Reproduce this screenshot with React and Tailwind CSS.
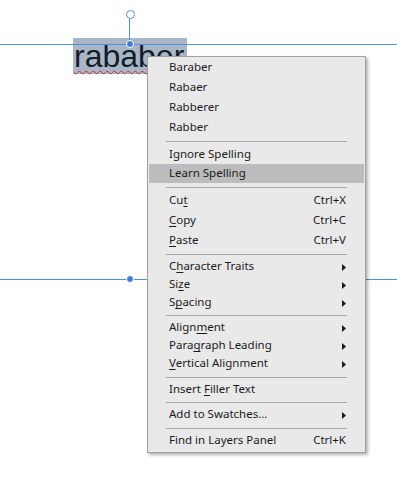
import React from "react";

const items = [
  { type: "group", h: "h-[20px]", rows: [
    { label: "Baraber" },
    { label: "Rabaer" },
    { label: "Rabberer" },
    { label: "Rabber" },
  ] },
  { type: "sep", h: "h-[7px]" },
  { type: "group", h: "h-[19px]", rows: [
    { label: "Ignore Spelling" },
    { label: "Learn Spelling", active: true },
  ] },
  { type: "sep", h: "h-[8px]" },
  { type: "group", h: "h-[20px]", rows: [
    { label: ["Cu", "t", ""], shortcut: "Ctrl+X" },
    { label: ["", "C", "opy"], shortcut: "Ctrl+C" },
    { label: ["", "P", "aste"], shortcut: "Ctrl+V" },
  ] },
  { type: "sep", h: "h-[7px]" },
  { type: "group", h: "h-[18px]", rows: [
    { label: ["C", "h", "aracter Traits"], sub: true },
    { label: ["Si", "z", "e"], sub: true },
    { label: ["S", "p", "acing"], sub: true },
  ] },
  { type: "sep", h: "h-[7px]" },
  { type: "group", h: "h-[18px]", rows: [
    { label: ["Align", "m", "ent"], sub: true },
    { label: ["Para", "g", "raph Leading"], sub: true },
    { label: ["", "V", "ertical Alignment"], sub: true },
  ] },
  { type: "sep", h: "h-[8px]" },
  { type: "group", h: "h-[18px]", rows: [{ label: ["Insert ", "F", "iller Text"] }] },
  { type: "sep", h: "h-[7px]" },
  { type: "group", h: "h-[18px]", rows: [{ label: "Add to Swatches...", sub: true }] },
  { type: "sep", h: "h-[8px]" },
  { type: "group", h: "h-[18px]", rows: [{ label: "Find in Layers Panel", shortcut: "Ctrl+K" }] },
];

const Label = ({ label }) => {
  if (typeof label === "string") return <span>{label}</span>;
  const [a, u, b] = label;
  return (
    <span>
      {a}
      <span className="underline underline-offset-2">{u}</span>
      {b}
    </span>
  );
};

const Arrow = () => (
  <svg width="4" height="7" viewBox="0 0 4 7" className="block">
    <path d="M0 0 L4 3.5 L0 7 Z" fill="#1a1a1a" />
  </svg>
);

const Row = ({ row, h }) => (
  <div
    className={`${h} mx-[1px] flex items-center pl-[20px] pr-[18px] ${
      row.active ? "bg-[#bcbcbc]" : ""
    }`}
  >
    <div className="flex-1 pb-[2px]">
      <Label label={row.label} />
    </div>
    {row.shortcut && <span className="pb-[2px]">{row.shortcut}</span>}
    {row.sub && <Arrow />}
  </div>
);

const Separator = ({ h }) => (
  <div className={`${h} flex items-center px-[18px]`}>
    <div className="h-px w-full bg-[#a7a7a7]" />
  </div>
);

const ContextMenu = () => (
  <div
    className="absolute left-[147px] top-[56px] w-[219px] border border-[#a0a0a0] bg-[#e9e9e9] text-[11.5px] text-[#1b1b1b] shadow-[2px_2px_3px_rgba(0,0,0,0.3)] pt-[1px] pb-[2px]"
    style={{ fontFamily: '"Noto Sans", "Open Sans", sans-serif' }}
  >
    {items.map((it, i) =>
      it.type === "sep" ? (
        <Separator key={i} h={it.h} />
      ) : (
        <div key={i}>
          {it.rows.map((r, j) => (
            <Row key={j} row={r} h={it.h} />
          ))}
        </div>
      )
    )}
  </div>
);

const Handle = ({ top }) => (
  <div
    className="absolute left-[126px] w-[8px] h-[8px] rounded-full bg-[#3d7fd6] border border-white"
    style={{ top }}
  />
);

export default function App() {
  return (
    <div className="relative w-[397px] h-[477px] bg-white overflow-hidden">
      {/* text frame */}
      <div
        className="absolute left-[73px] top-[38px] h-[36px] bg-[#a9b6c6] pl-[1px] pr-[3px] text-[32px] leading-[36px] text-[#141c2c]"
        style={{ fontFamily: '"Liberation Sans", Arial, sans-serif' }}
      >
        <span className="underline decoration-wavy decoration-[#cc2a2a] decoration-1 underline-offset-[3px]">
          rababer
        </span>
      </div>

      {/* guide lines */}
      <div className="absolute left-0 top-[44px] h-px w-full bg-[#4f8fdb]" />
      <div className="absolute left-0 top-[279px] h-px w-full bg-[#4f8fdb]" />

      {/* rotate handle */}
      <div className="absolute left-[129px] top-[18px] h-[26px] w-px bg-[#4f8fdb]" />
      <div className="absolute left-[126px] top-[10px] h-[9px] w-[9px] rounded-full border-[1.5px] border-[#4f8fdb] bg-white" />
      <Handle top={40} />
      <Handle top={275} />

      <ContextMenu />
    </div>
  );
}
